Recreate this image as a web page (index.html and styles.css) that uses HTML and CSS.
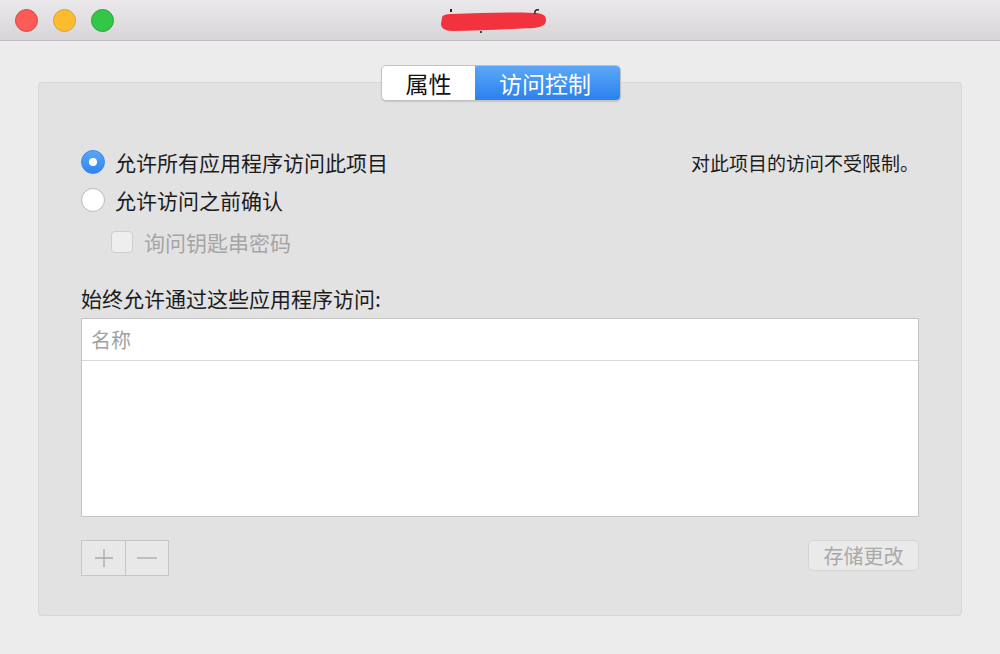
FILE: index.html
```html
<!DOCTYPE html>
<html lang="zh-CN">
<head>
<meta charset="utf-8">
<title>访问控制</title>
<link rel="stylesheet" href="styles.css">
</head>
<body>
<div class="window">
  <header class="titlebar">
    <div class="lights">
      <span class="light red"></span>
      <span class="light yellow"></span>
      <span class="light green"></span>
    </div>
    <div class="title">
      <svg width="112" height="26" viewBox="0 0 112 26">
        <path d="M4 10 C 4 7, 8 6, 14 6 C 40 5, 70 4, 96 5 C 104 5, 108 7, 108 12 C 108 17, 104 19, 96 20 C 70 21, 40 23, 14 23 C 7 23, 3 20, 3 16 Z" fill="#f2333d"/>
        <rect x="12" y="1" width="2" height="3" fill="#222"/>
        <path d="M97 6 C 96 3, 98 1, 101 2" stroke="#222" stroke-width="1.5" fill="none"/>
        <rect x="42" y="23" width="2" height="2" fill="#444"/>
      </svg>
    </div>
  </header>
  <main class="content">
    <div class="segmented">
      <span class="seg">属性</span>
      <span class="seg active">访问控制</span>
    </div>
    <section class="panel">
      <div class="row">
        <label class="opt"><span class="radio checked"></span>允许所有应用程序访问此项目</label>
        <span class="note">对此项目的访问不受限制。</span>
      </div>
      <div class="row">
        <label class="opt"><span class="radio"></span>允许访问之前确认</label>
      </div>
      <div class="row sub">
        <label class="opt disabled"><span class="check"></span>询问钥匙串密码</label>
      </div>
      <div class="listlabel">始终允许通过这些应用程序访问:</div>
      <div class="list">
        <div class="list-head">名称</div>
      </div>
      <div class="actions">
        <div class="pm">
          <span class="pmbtn">
            <svg width="22" height="22" viewBox="0 0 22 22"><path d="M11 2V20M2 11H20" stroke="#a9a8a9" stroke-width="1.3"/></svg>
          </span>
          <span class="pmbtn">
            <svg width="22" height="22" viewBox="0 0 22 22"><path d="M1 11H21" stroke="#a9a8a9" stroke-width="1.3"/></svg>
          </span>
        </div>
        <span class="save">存储更改</span>
      </div>
    </section>
  </main>
</div>
</body>
</html>
```
FILE: styles.css
```css
* { box-sizing: border-box; }
html, body {
  margin: 0;
  padding: 0;
  background: #edeced;
}
body {
  font-family: "Noto Sans CJK SC", "Noto Sans", sans-serif;
  color: #1c1c1c;
}
.window {
  width: 1000px;
  height: 654px;
  background: #edeced;
  display: flex;
  flex-direction: column;
}
.titlebar {
  height: 41px;
  background: linear-gradient(#ebe9eb, #d7d5d7);
  border-bottom: 1px solid #bfbdbf;
  display: grid;
  grid-template-columns: 1fr auto 1fr;
  align-items: center;
}
.lights {
  display: flex;
  gap: 15px;
  padding-left: 15px;
}
.light {
  width: 23px;
  height: 23px;
  border-radius: 50%;
}
.red { background: #fc5b57; border: 1px solid #e0443f; }
.yellow { background: #fdbc2e; border: 1px solid #e0a02a; }
.green { background: #33c748; border: 1px solid #24a835; }
.title {
  display: flex;
  margin-right: 12px;
  margin-top: 2px;
}
.content {
  flex: 1;
  padding: 24px 38px 0 38px;
  display: flex;
  flex-direction: column;
  align-items: center;
}
.segmented {
  display: flex;
  height: 36px;
  border-radius: 5px;
  border: 1px solid #c2c1c2;
  background: #fff;
  position: relative;
  z-index: 1;
  margin-left: 2px;
  overflow: hidden;
  box-shadow: 0 1px 1px rgba(0,0,0,0.12);
}
.seg {
  display: flex;
  align-items: center;
  justify-content: center;
  font-size: 23px;
  line-height: 1;
  width: 93px;
  color: #111;
}
.seg.active {
  width: 145px;
  color: #fff;
  background: linear-gradient(#5ca7f7, #2a81ee);
  padding-right: 5px;
}
.panel {
  width: 924px;
  margin-top: -19px;
  height: 534px;
  background: #e3e2e3;
  border: 1px solid #d8d7d8;
  border-radius: 4px;
  padding: 60px 42px 0 42px;
  display: flex;
  flex-direction: column;
}
.row {
  height: 38px;
  display: flex;
  align-items: center;
  justify-content: space-between;
}
.row.sub {
  margin-top: 4px;
  padding-left: 30px;
}
.opt {
  display: flex;
  align-items: center;
  font-size: 21px;
  line-height: 1;
  gap: 10px;
}
.opt.disabled {
  color: #a6a5a6;
  gap: 11px;
}
.radio {
  width: 24px;
  height: 24px;
  border-radius: 50%;
  background: #fff;
  border: 1px solid #b9b8b9;
  display: flex;
  align-items: center;
  justify-content: center;
}
.radio.checked {
  background: linear-gradient(#5aa6f7, #3086ef);
  border-color: #3a86e4;
}
.radio.checked::after {
  content: "";
  width: 8px;
  height: 8px;
  border-radius: 50%;
  background: #fff;
}
.check {
  width: 22px;
  height: 22px;
  border-radius: 4px;
  background: #efeeef;
  border: 1px solid #cfcecf;
}
.note {
  font-size: 19px;
  line-height: 1;
  padding-right: 0;
}
.listlabel {
  margin-top: 24px;
  height: 26px;
  font-size: 21px;
  line-height: 26px;
}
.list {
  margin-top: 7px;
  height: 199px;
  background: #fff;
  border: 1px solid #c6c5c6;
}
.list-head {
  height: 42px;
  border-bottom: 1px solid #d9d8d9;
  font-size: 20px;
  color: #a3a2a3;
  padding-left: 9px;
  display: flex;
  align-items: center;
}
.actions {
  margin-top: 23px;
  display: flex;
  justify-content: space-between;
  align-items: flex-start;
}
.pm {
  display: flex;
  border: 1px solid #c6c5c6;
  height: 36px;
}
.pmbtn {
  width: 43px;
  display: flex;
  align-items: center;
  justify-content: center;
  background: #e9e8e9;
}
.pmbtn + .pmbtn {
  border-left: 1px solid #c6c5c6;
}
.save {
  width: 111px;
  height: 31px;
  border-radius: 5px;
  background: #ebeaeb;
  border: 1px solid #d6d5d6;
  color: #a9a8a9;
  font-size: 20px;
  display: flex;
  align-items: center;
  justify-content: center;
}
```
